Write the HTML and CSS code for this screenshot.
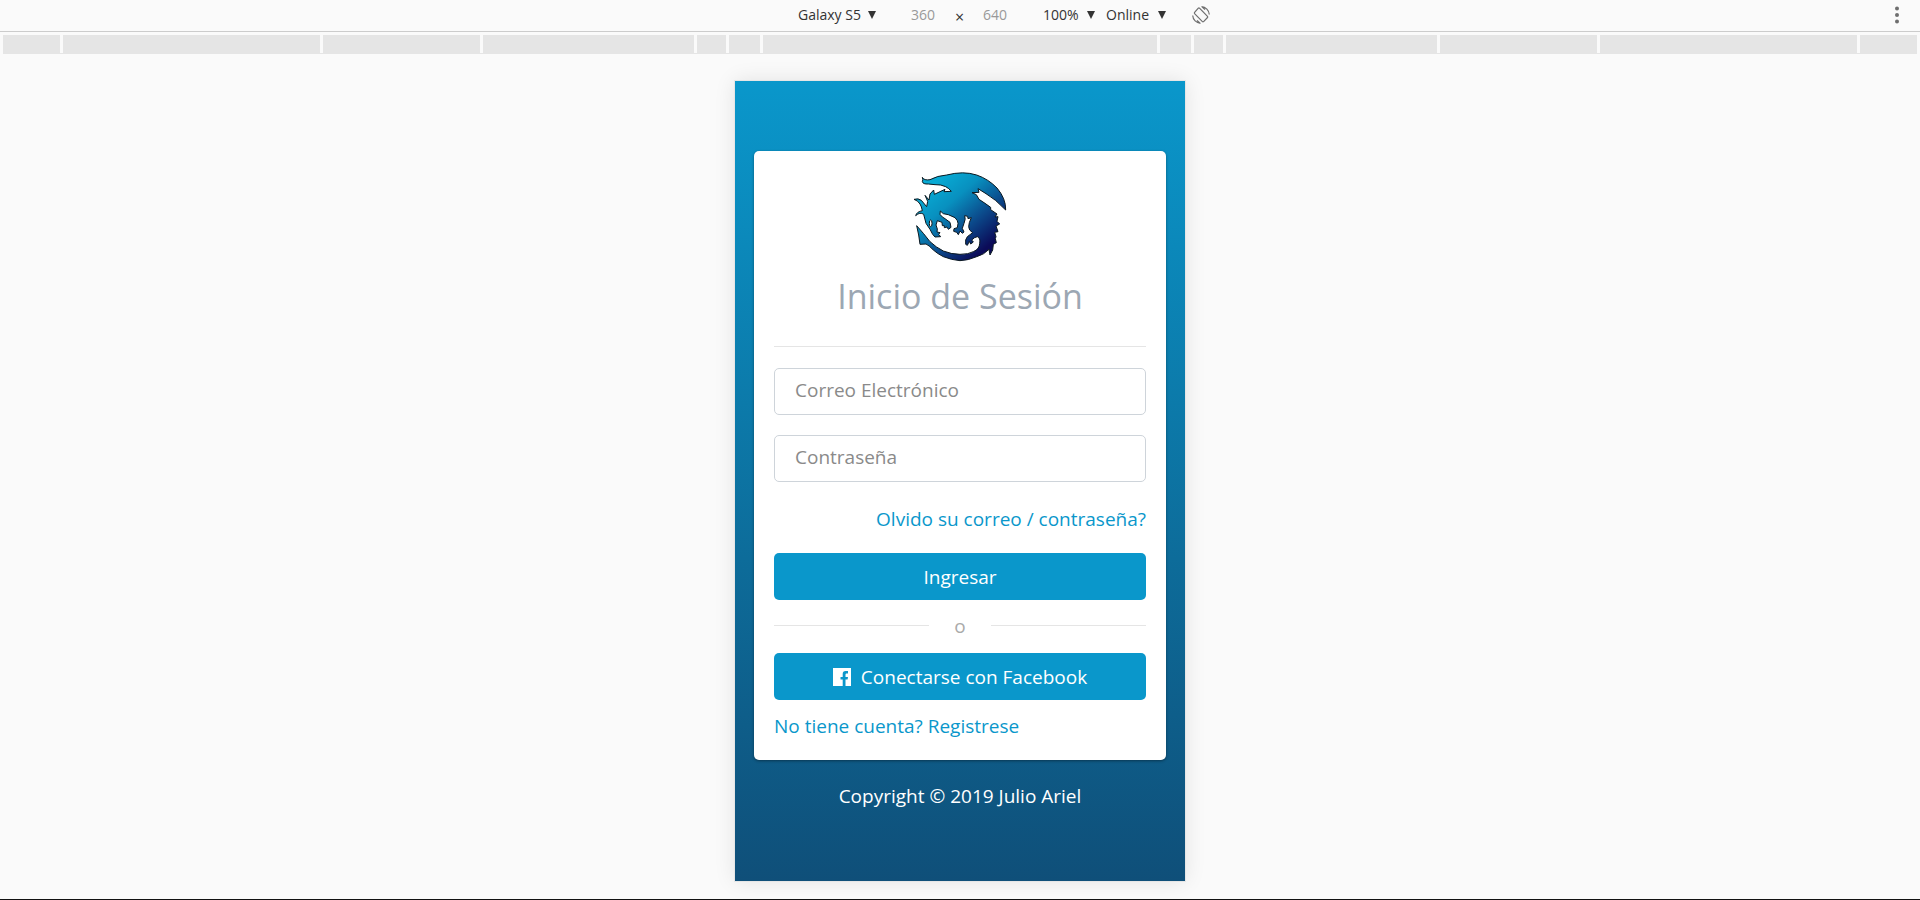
FILE: index.html
```html
<!DOCTYPE html>
<html lang="es">
<head>
<meta charset="utf-8">
<meta name="viewport" content="width=device-width, initial-scale=1">
<title>Inicio de Sesión</title>
<link rel="stylesheet" href="styles.css">
</head>
<body>
<header class="toolbar">
  <div class="toolbar-controls">
    <span class="picker picker-device">
      <select aria-label="Device"><option>Galaxy S5</option></select>
      <svg class="arrow" viewBox="0 0 8 8" aria-hidden="true"><path d="M0 0h8L4 8z"/></svg>
    </span>
    <span class="size">
      <input type="text" value="360" aria-label="Width">
      <span class="times">×</span>
      <input type="text" value="640" aria-label="Height">
    </span>
    <span class="picker picker-zoom">
      <select aria-label="Zoom"><option>100%</option></select>
      <svg class="arrow" viewBox="0 0 8 8" aria-hidden="true"><path d="M0 0h8L4 8z"/></svg>
    </span>
    <span class="picker picker-network">
      <select aria-label="Network"><option>Online</option></select>
      <svg class="arrow" viewBox="0 0 8 8" aria-hidden="true"><path d="M0 0h8L4 8z"/></svg>
    </span>
    <button class="icon-button" type="button" aria-label="Rotate">
      <svg width="18" height="18" viewBox="0 0 18 18" fill="none" stroke="#6e6e6e" stroke-width="1.2">
        <path d="M6.3 2.2 2.6 6.4q-.5.6 0 1.200l7.800 8q.6.5 1.200 0l3.900-4.100q.5-.6 0-1.200l-8-8.100q-.6-.5-1.200 0z"/>
        <path d="M9.500.7a8.300 8.300 0 0 1 7.800 7.800M10 .7l3 2.900M.7 9.500a8.300 8.300 0 0 0 7.800 7.800M8 17.300l-3-2.900"/>
      </svg>
    </button>
  </div>
  <button class="icon-button menu" type="button" aria-label="More options">
    <svg width="6" height="18" viewBox="0 0 6 18" fill="#6e6e6e"><circle cx="3" cy="2.500" r="2"/><circle cx="3" cy="9" r="2"/><circle cx="3" cy="15.500" r="2"/></svg>
  </button>
</header>
<div class="ruler" aria-hidden="true">
  <i class="w-57"></i><i class="w-257"></i><i class="w-157"></i><i class="w-211"></i><i class="w-29"></i><i class="w-31"></i><i class="w-394"></i><i class="w-31"></i><i class="w-29"></i><i class="w-211"></i><i class="w-157"></i><i class="w-257"></i><i class="w-57"></i>
</div>
<main class="stage">
  <div class="phone">
    <form class="card">
      <svg class="logo" viewBox="36 33 288 273" role="img" aria-label="Logo">
        <defs><linearGradient id="scales" gradientUnits="userSpaceOnUse" x1="100" y1="75" x2="260" y2="262"><stop offset="0" stop-color="#08a9d3"/><stop offset=".3" stop-color="#0890bf"/><stop offset=".65" stop-color="#0b4b8c"/><stop offset="1" stop-color="#0b0b58"/></linearGradient></defs>
        <path fill="url(#scales)" stroke="#0b1820" stroke-width="3" stroke-linejoin="round" d="M67 52Q72 62 90 59Q112 47 140 45Q190 32 230 45Q265 57 291 84Q318 116 317 150Q286 117 258 101L234 86L237 97L216 98L229 104L237 118L255 130L272 142L272 149L291 162L285 171L294 170L291 184L299 192L288 198L294 215L284 217L288 230L286 236L289 248L280 253L278 270L270 285L267 268Q252 284 230 290Q205 301 180 302Q155 300 130 290Q112 281 100 270Q86 255 78 252L60 253L56 225L50 197L70 220L90 245Q108 262 130 273Q155 283 180 283Q206 283 220 275Q239 267 239 250Q242 234 232 230Q224 231 215 240L220 246L212 252L208 244L202 256L197 253L197 240L202 230L218 218Q206 211 206 200Q206 189 214 173L204 176L203 169L194 167Q198 177 192 190L187 205L192 216L187 220L180 213L175 224L170 217L161 214L162 206L172 203Q176 188 172 182L165 173L145 164L130 161L121 153L120 163Q126 172 135 176L150 187L153 202L145 208L141 201L133 203L133 197L127 197L126 187L112 182L108 195L112 207L111 216L120 218L116 223L122 230L105 231Q98 226 90 208L78 190L71 163Q60 155 47 167Q50 155 67 152Q65 140 60 132Q54 122 42 118Q55 114 64 121L80 140L83 124L75 106L87 120L90 102L101 90L103 103L135 88L132 95L154 94Q147 85 137 80Q123 73 105 74L85 72Q69 73 67 65Q70 60 67 52Z"/>
        <ellipse cx="92" cy="190" rx="4" ry="10" fill="#fff" stroke="#111" stroke-width="3"/>
      </svg>
      <h1>Inicio de Sesión</h1>
      <hr class="rule">
      <input class="field" type="email" placeholder="Correo Electrónico" aria-label="Correo Electrónico">
      <input class="field" type="password" placeholder="Contraseña" aria-label="Contraseña">
      <a class="forgot" href="#">Olvido su correo / contraseña?</a>
      <button class="button" type="submit">Ingresar</button>
      <div class="divider">o</div>
      <button class="button" type="button">
        <svg width="18" height="18" viewBox="0 0 18 18" aria-hidden="true"><path fill="#fff" fill-rule="evenodd" d="M0 0h18v18h-5.500v-6.500h2.100l.4-2.500h-2.500V6.700c0-.9.5-1.300 1.300-1.300H15V3h-2.300C10.500 3 9.700 4.300 9.700 6v3H7.500v2.500h2.200V18H0z"/></svg>
        Conectarse con Facebook
      </button>
      <a class="register" href="#">No tiene cuenta? Registrese</a>
    </form>
    <footer>Copyright © 2019 Julio Ariel</footer>
  </div>
</main>
</body>
</html>
```
FILE: styles.css
```css
* {
  box-sizing: border-box;
}

body {
  margin: 0;
  min-height: 100vh;
  display: flex;
  flex-direction: column;
  background: #fafafa;
  border-bottom: 1px solid #111;
  font-family: "Open Sans", "Noto Sans", sans-serif;
  font-size: 19px;
  line-height: 24px;
}

button,
input,
select {
  font: inherit;
  color: inherit;
}

.toolbar {
  display: grid;
  grid-template-columns: 1fr auto 1fr;
  align-items: center;
  height: 32px;
  padding-bottom: 2px;
  border-bottom: 1px solid #ccc;
  font-size: 14px;
  line-height: 20px;
  color: #333;
}

.toolbar-controls {
  grid-column: 2;
  display: flex;
  align-items: center;
  margin-left: 88px;
}

.picker {
  display: flex;
  align-items: center;
  justify-content: space-between;
}

.picker select {
  appearance: none;
  padding: 0;
  border: 0;
  background: none;
}

.picker-device {
  width: 78px;
  margin-right: 35px;
}

.picker-zoom {
  width: 52px;
  margin-right: 11px;
}

.picker-network {
  width: 60px;
  margin-right: 26px;
}

.arrow {
  width: 8px;
  height: 8px;
  fill: #333;
}

.size {
  display: flex;
  align-items: center;
  justify-content: space-between;
  width: 97px;
  margin-right: 35px;
}

.size input {
  width: 25px;
  padding: 0;
  border: 0;
  background: none;
  color: #999;
}

.times {
  padding-top: 4px;
  font-size: 16px;
}

.icon-button {
  display: flex;
  padding: 0;
  border: 0;
  background: none;
}

.menu {
  justify-self: end;
  margin-right: 20px;
}

.ruler {
  display: flex;
  gap: 3px;
  height: 19px;
  margin: 3px 3px 0;
  border-bottom: 1px solid #e5e5e5;
}

.ruler i {
  flex: 1 1 0;
  background: #e5e5e5;
}

.ruler .w-29 { flex-grow: 29; }
.ruler .w-31 { flex-grow: 31; }
.ruler .w-57 { flex-grow: 57; }
.ruler .w-157 { flex-grow: 157; }
.ruler .w-211 { flex-grow: 211; }
.ruler .w-257 { flex-grow: 257; }
.ruler .w-394 { flex-grow: 394; }

.stage {
  flex: 1;
  display: flex;
  justify-content: center;
  padding: 27px 0 18px;
}

.phone {
  width: 450px;
  max-width: 100%;
  padding: 70px 19px 0;
  background: linear-gradient(#0a97cb, #0f4f79);
  box-shadow: 0 0 0 1px #e6e6e6, 0 0 20px rgba(0, 0, 0, 0.1);
}

.card {
  display: flex;
  flex-direction: column;
  padding: 20px 20px 22px;
  background: #fff;
  border-radius: 5px;
  box-shadow: 0 1px 3px rgba(0, 0, 0, 0.4);
}

.logo {
  width: 96px;
  height: 91px;
  align-self: center;
}

h1 {
  margin: 10px 0 26px;
  font-size: 34px;
  line-height: 48px;
  font-weight: 400;
  text-align: center;
  color: #9ca7b3;
}

.rule {
  width: 100%;
  margin: 0 0 21px;
  border: 0;
  border-top: 1px solid #e5e5e5;
}

.field {
  width: 100%;
  height: 47px;
  margin-bottom: 20px;
  padding: 0 20px 4px;
  border: 1px solid #ced4da;
  border-radius: 5px;
  background: #fff;
}

.field::placeholder {
  color: #8a8a8a;
  opacity: 1;
}

.forgot,
.register {
  color: #0a97cb;
  text-decoration: none;
}

.forgot {
  align-self: flex-end;
  margin: 5px 0 22px;
}

.button {
  display: flex;
  align-items: center;
  justify-content: center;
  gap: 10px;
  height: 47px;
  padding: 0;
  border: 0;
  border-radius: 5px;
  background: #0a97cb;
  color: #fff;
  font-weight: 500;
}

.divider {
  display: grid;
  grid-template-columns: 5fr 2fr 5fr;
  align-items: center;
  height: 53px;
  padding-bottom: 2px;
  text-align: center;
  color: #aaa;
  font-weight: 500;
}

.divider::before,
.divider::after {
  content: "";
  border-top: 1px solid #e5e5e5;
}

.register {
  align-self: flex-start;
  margin-top: 14px;
}

footer {
  margin-top: 24px;
  text-align: center;
  color: #fff;
  font-weight: 500;
}
```
